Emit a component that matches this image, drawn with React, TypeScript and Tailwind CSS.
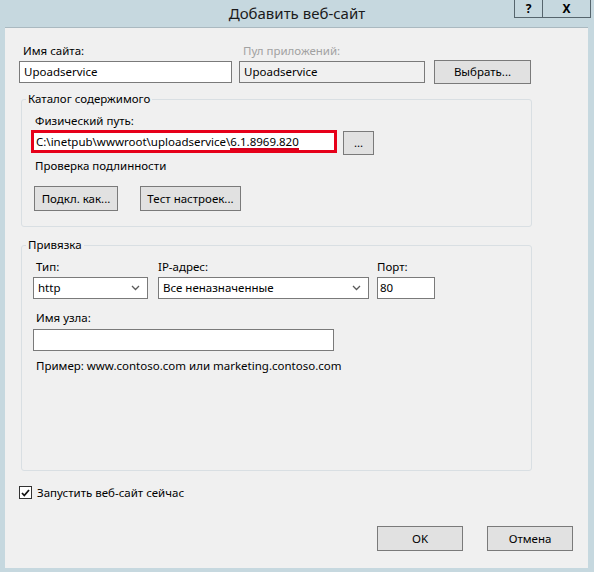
import type { ReactNode } from "react";

const Btn = ({ children, className = "" }: { children: ReactNode; className?: string }) => (
  <button
    type="button"
    className={`flex items-center justify-center border border-[#7a7a7a] bg-[#e1e1e1] text-black leading-none ${className}`}
  >
    {children}
  </button>
);

const Label = ({ children, className = "" }: { children: ReactNode; className?: string }) => (
  <div className={`h-[16px] leading-[16px] ${className}`}>{children}</div>
);

const Chevron = () => (
  <svg width="9" height="6" viewBox="0 0 9 6" className="shrink-0">
    <path d="M1 1l3.5 3.5L8 1" stroke="#5a5a5a" strokeWidth="1.3" fill="none" />
  </svg>
);

const Select = ({ value, className = "" }: { value: string; className?: string }) => (
  <div
    className={`flex h-[22px] items-center justify-between border border-[#7a7a7a] bg-white pl-[4px] pr-[7px] ${className}`}
  >
    <span>{value}</span>
    <Chevron />
  </div>
);

export default function App() {
  return (
    <div className="flex h-[572px] w-[594px] flex-col bg-[#c6d8df] font-['Noto_Sans',sans-serif] text-[11.5px] text-black">
      {/* title bar */}
      <div className="grid h-[27px] shrink-0 grid-cols-[1fr_auto_1fr]">
        <div />
        <div className="pt-[3px] text-[15px] leading-[20px] text-[#1b1b1b]">Добавить веб-сайт</div>
        <div className="flex justify-end pr-[3px]">
          <div className="flex h-[18px] border border-t-0 border-[#56656d] text-[12px] font-bold">
            <div className="flex w-[28px] items-center justify-center border-r border-[#56656d]">?</div>
            <div className="flex w-[47px] items-center justify-center">X</div>
          </div>
        </div>
      </div>

      <div className="mb-[4px] ml-[5px] mr-[6px] flex flex-1 flex-col border-t border-[#aab9c0] bg-[#f0f0f0] pl-[14px] pt-[15px]">
        {/* site name / pool */}
        <div className="flex items-start">
          <div className="w-[213px]">
            <Label className="mb-[2px] pl-[4px]">Имя сайта:</Label>
            <div className="h-[22px] border border-[#7a7a7a] bg-white pl-[4px] leading-[20px]">Upoadservice</div>
          </div>
          <div className="ml-[7px] w-[186px]">
            <Label className="mb-[2px] pl-[4px] text-[#a2a2a2]">Пул приложений:</Label>
            <div className="h-[22px] border border-[#7a7a7a] bg-[#f0f0f0] pl-[4px] leading-[20px]">Upoadservice</div>
          </div>
          <Btn className="ml-[9px] mt-[17px] h-[24px] w-[97px]">Выбрать...</Btn>
        </div>

        {/* content directory */}
        <fieldset className="ml-[2px] mt-[7px] w-[511px] rounded-[3px] border border-[#d9dfe3] pb-[15px] pl-[9px]">
          <legend className="ml-[-5px] px-[2px] leading-[16px]">Каталог содержимого</legend>
          <Label className="mt-[6px] pl-[4px]">Физический путь:</Label>
          <div className="mt-[1px] flex items-start">
            <div className="h-[23px] w-[306px] border-[3px] border-[#e6001a] bg-white pl-[2px] leading-[17px]">
              C:\inetpub\wwwroot\uploadservice\
              <span className="inline-block border-b-2 border-[#d4001a] leading-[12px]">6.1.8969.820</span>
            </div>
            <Btn className="ml-[6px] mt-[1px] h-[24px] w-[31px]">...</Btn>
          </div>
          <Label className="mt-[3px] pl-[4px]">Проверка подлинности</Label>
          <div className="ml-[3px] mt-[12px] flex">
            <Btn className="h-[25px] w-[84px]">Подкл. как...</Btn>
            <Btn className="ml-[22px] h-[25px] w-[101px]">Тест настроек...</Btn>
          </div>
        </fieldset>

        {/* binding */}
        <fieldset className="ml-[2px] mt-[10px] w-[511px] rounded-[3px] border border-[#d9dfe3] pb-[96px] pl-[11px]">
          <legend className="ml-[-7px] px-[2px] leading-[16px]">Привязка</legend>
          <div className="mt-[6px] flex items-start">
            <div className="w-[115px]">
              <Label className="mb-[2px] pl-[3px]">Тип:</Label>
              <Select value="http" />
            </div>
            <div className="ml-[10px] w-[211px]">
              <Label className="mb-[2px]">IP-адрес:</Label>
              <Select value="Все неназначенные" />
            </div>
            <div className="ml-[8px] w-[58px]">
              <Label className="mb-[2px]">Порт:</Label>
              <div className="h-[22px] border border-[#7a7a7a] bg-white pl-[2px] leading-[20px]">80</div>
            </div>
          </div>
          <Label className="mt-[11px] pl-[3px]">Имя узла:</Label>
          <div className="mt-[3px] h-[22px] w-[301px] border border-[#7a7a7a] bg-white" />
          <Label className="mt-[7px] pl-[3px]">Пример: www.contoso.com или marketing.contoso.com</Label>
        </fieldset>

        {/* start now */}
        <div className="mt-[15px] flex h-[13px] items-center">
          <div className="flex h-[13px] w-[13px] items-center justify-center border border-[#333] bg-white">
            <svg width="9" height="8" viewBox="0 0 9 8">
              <path d="M1 4l2.3 2.5L8 1" stroke="#111" strokeWidth="1.8" fill="none" />
            </svg>
          </div>
          <span className="ml-[5px] leading-[16px]">Запустить веб-сайт сейчас</span>
        </div>

        {/* dialog buttons */}
        <div className="mb-[17px] mr-[15px] mt-auto flex justify-end">
          <Btn className="h-[25px] w-[86px]">OK</Btn>
          <Btn className="ml-[24px] h-[25px] w-[86px]">Отмена</Btn>
        </div>
      </div>
    </div>
  );
}
